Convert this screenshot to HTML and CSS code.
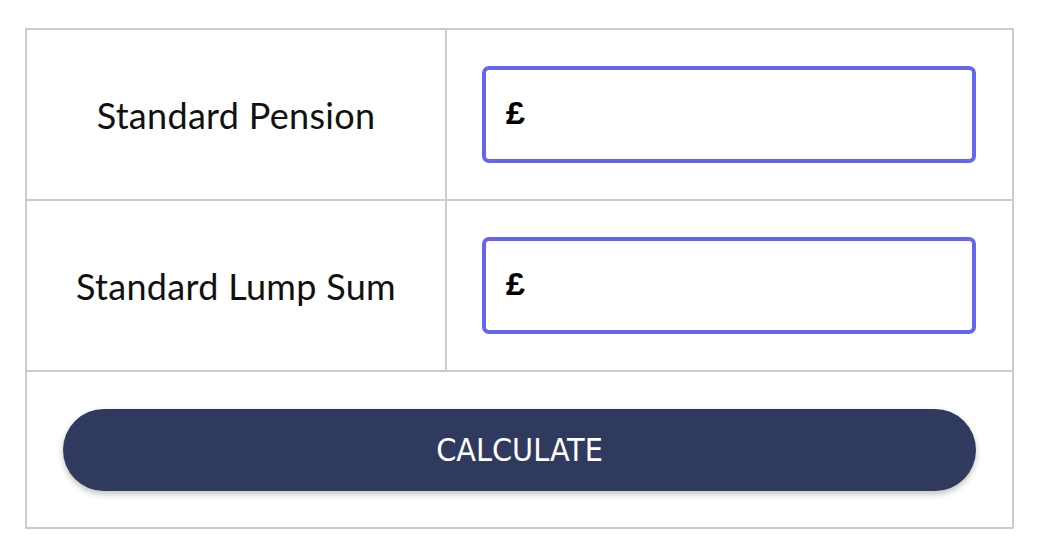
FILE: index.html
```html
<!DOCTYPE html>
<html lang="en">
<head>
    <meta charset="UTF-8">
    <meta name="viewport" content="width=device-width, initial-scale=1.0">
    <title>Pension Calculator</title>
    <link rel="stylesheet" href="styles.css">
</head>
<body>

    <!-- Pension form -->
    <table class="calc-table">
        <tr>
            <td class="label-cell">Standard Pension</td>
            <td class="input-cell">
                <div class="money-field">
                    <span class="currency">£</span>
                    <input type="text" id="pension">
                </div>
            </td>
        </tr>
        <tr>
            <td class="label-cell">Standard Lump Sum</td>
            <td class="input-cell">
                <div class="money-field">
                    <span class="currency">£</span>
                    <input type="text" id="lump-sum">
                </div>
            </td>
        </tr>
        <tr>
            <td class="button-cell" colspan="2">
                <button class="calc-button">CALCULATE</button>
            </td>
        </tr>
    </table>

</body>
</html>
```

FILE: styles.css
```css
body {
    margin: 0;
    padding: 28px 0 0 25px;
    background: #fff;
    font-family: Lato, "Noto Sans", sans-serif;
    color: #111;
}
.calc-table {
    border-collapse: collapse;
    width: 989px;
    border: 2px solid #cccccc;
}
.calc-table td {
    border: 2px solid #cccccc;
    padding: 0;
}
.label-cell {
    width: 418px;
    height: 169px;
    text-align: center;
    font-size: 36px;
    letter-spacing: 0.3px;
}
.input-cell {
    padding: 0 36px 0 35px !important;
}
.money-field {
    display: flex;
    align-items: center;
    height: 89px;
    border: 4px solid #6466f1;
    border-radius: 7px;
    padding: 0 19px;
    background: #fff;
}
.currency {
    font-family: "Liberation Mono", "Courier New", monospace;
    font-weight: bold;
    font-size: 34px;
    color: #000;
}
.money-field input {
    flex: 1;
    border: none;
    outline: none;
    font-size: 28px;
    background: transparent;
}
.button-cell {
    height: 155px;
    padding: 0 36px !important;
}
.calc-button {
    display: block;
    width: 100%;
    height: 82px;
    border: none;
    border-radius: 41px;
    background: #303a5e;
    color: #fff;
    font-family: "DejaVu Sans Condensed", "DejaVu Sans", sans-serif;
    font-size: 32px;
    font-weight: normal;
    box-shadow: 0 3px 6px rgba(0, 0, 0, 0.25);
    cursor: pointer;
}
```
